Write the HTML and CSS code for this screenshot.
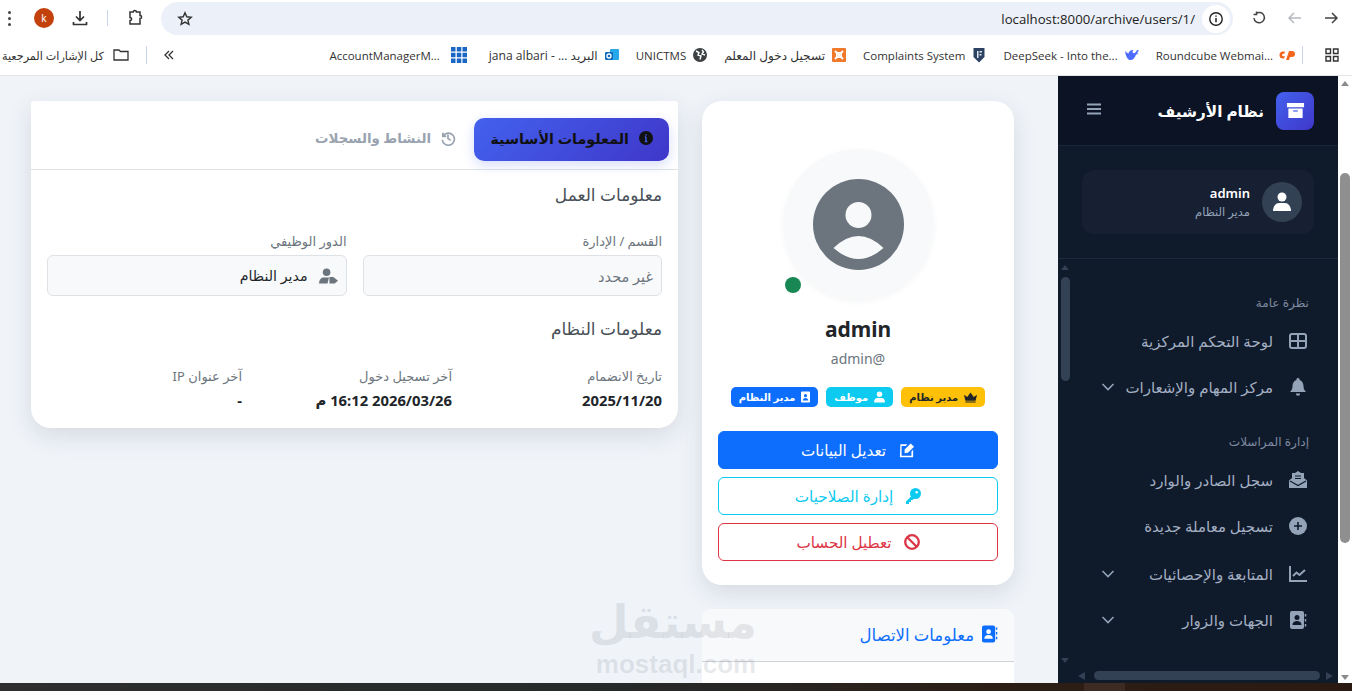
FILE: index.html
```html
<!DOCTYPE html>
<html lang="ar" dir="rtl">
<head>
  <meta charset="UTF-8" />
  <title>نظام الأرشيف</title>
  <link rel="stylesheet" href="styles.css">
</head>
<body>
  <!-- browser chrome -->
  <div class="toolbar">
    <svg class="tb-btn" viewBox="0 0 16 16"><path d="M2 8h12M9 3l5 5-5 5" fill="none" stroke="#444" stroke-width="1.5"/></svg>
    <svg class="tb-btn tb-off" viewBox="0 0 16 16"><path d="M14 8H2M7 3L2 8l5 5" fill="none" stroke="#b4b8bf" stroke-width="1.5"/></svg>
    <svg class="tb-btn" viewBox="0 0 16 16"><path d="M5 3.500A5.200 5.200 0 1 1 3 8M5.500 1.500v3h-3" fill="none" stroke="#444" stroke-width="1.5"/></svg>
    <div class="omnibox">
      <span class="site-info"><svg viewBox="0 0 16 16" width="16" height="16"><circle cx="8" cy="8" r="6.200" fill="none" stroke="#222" stroke-width="1.400"/><path d="M8 7v4.200M8 4.400v1.400" stroke="#222" stroke-width="1.500"/></svg></span>
      <span class="url" dir="ltr">localhost:8000/archive/users/1/</span>
      <svg class="star" viewBox="0 0 16 16" width="16" height="16"><path d="M8 1.800l1.800 4 4.400.4-3.300 2.900 1 4.300L8 11.100l-3.900 2.300 1-4.300-3.300-2.900 4.400-.4z" fill="none" stroke="#333" stroke-width="1.400"/></svg>
    </div>
    <svg class="tb-ext" viewBox="0 0 18 18" width="18" height="18"><path d="M4 3h3.200a1.600 1.600 0 0 1 3.200 0H14v3.400a1.600 1.600 0 0 1 0 3.200V15H4v-3.400a1.600 1.600 0 0 0 0-3.200z" fill="none" stroke="#333" stroke-width="1.500"/></svg>
    <span class="tb-sep"></span>
    <svg class="tb-dl" viewBox="0 0 18 18" width="18" height="18"><path d="M9 2v9M5 7.500L9 11.500l4-4M2.500 13v2.500h13V13" fill="none" stroke="#333" stroke-width="1.700"/></svg>
    <span class="profile">k</span>
    <span class="dots"><i></i><i></i><i></i></span>
  </div>

  <div class="bookmarks">
    <svg class="bm-apps" viewBox="0 0 14 14" width="14" height="14"><path d="M1 1h4.500v4.500H1zM8.500 1H13v4.500H8.500zM1 8.500h4.500V13H1zM8.500 8.500H13V13H8.500z" fill="none" stroke="#333" stroke-width="1.400"/></svg>
    <span class="bm-sep"></span>
    <span class="bm"><svg viewBox="0 0 16 16" width="16" height="16"><path d="M6 4.500H4a3.500 3.500 0 0 0 0 7h1l1-2.300H4.300a1.200 1.200 0 0 1 0-2.400h1zM7 13l3-9h3a2.500 2.500 0 0 1 0 6h-2l-1 3z" fill="#f4661e"/></svg><span dir="ltr">Roundcube Webmai...</span></span>
    <span class="bm"><svg viewBox="0 0 16 16" width="16" height="16"><path d="M1 4c1 1 2 2 3.500 2.500C5 4 7 2.500 9.500 3c-1 .8-1.200 2-.5 3 1.500.5 3-.5 4-3l2 .5-2 2.500 1.500 1-2.500.5C11 11 8.500 13.500 6 13 3 12.500 1.500 8 1 4z" fill="#4d6bfe"/></svg><span dir="ltr">DeepSeek - Into the...</span></span>
    <span class="bm"><svg viewBox="0 0 16 16" width="16" height="16"><path d="M2.500 1h11v9L8 15.500 2.500 10z" fill="#2d4263"/><path d="M6 4h1.500v7H6zM8.500 4H11v1.500H8.500zM8.500 7H10.500v1.500H8.500z" fill="#dfe6ef"/></svg><span dir="ltr">Complaints System</span></span>
    <span class="bm"><svg viewBox="0 0 16 16" width="16" height="16"><rect x="1" y="1" width="14" height="14" rx="1" fill="#f0792b"/><path d="M4 4l8 8M12 4l-8 8" stroke="#fff" stroke-width="2"/><rect x="5.500" y="5.500" width="5" height="5" fill="none" stroke="#fff"/></svg><span class="bm-ar">تسجيل دخول المعلم</span></span>
    <span class="bm"><svg viewBox="0 0 16 16" width="16" height="16"><circle cx="8" cy="8" r="7" fill="#3c4043"/><path d="M4 4l3 1.500-1 2.500 3 1-1 3.500M10 3l1.500 2L10 7l3 1" fill="none" stroke="#fff" stroke-width="1.400"/></svg><span dir="ltr">UNICTMS</span></span>
    <span class="bm"><svg viewBox="0 0 16 16" width="16" height="16"><rect x="6" y="2" width="9" height="11" rx="1" fill="#28a8ea"/><rect x="1" y="5" width="8" height="8" rx="1" fill="#0f6cbd"/><circle cx="5" cy="9" r="2" fill="none" stroke="#fff" stroke-width="1.300"/></svg><span class="bm-ar">البريد ... - jana albari</span></span>
    <span class="bm bm-grid"><svg viewBox="0 0 16 16" width="16" height="16"><path d="M0 0h4.500v4.500H0zM5.800 0h4.500v4.500H5.800zM11.500 0H16v4.500h-4.500zM0 5.800h4.500v4.500H0zM5.800 5.800h4.500v4.500H5.800zM11.500 5.800H16v4.500h-4.500zM0 11.500h4.500V16H0zM5.800 11.500h4.500V16H5.800zM11.500 11.500H16V16h-4.500z" fill="#1a66c4"/></svg><span dir="ltr">AccountManagerM...</span></span>
    <span class="bm-more"><svg viewBox="0 0 12 12" width="12" height="12"><path d="M6 2L2 6l4 4M10 2L6 6l4 4" fill="none" stroke="#333" stroke-width="1.300"/></svg></span>
    <span class="bm-sep bm-sep-2"></span>
    <span class="bm bm-all"><svg viewBox="0 0 16 16" width="16" height="16"><path d="M1 3h5l1.500 1.500H15V13H1z" fill="none" stroke="#333" stroke-width="1.300"/></svg><span>كل الإشارات المرجعية</span></span>
  </div>

  <div class="viewport">
    <div class="page-bar">
      <span class="pb-up"></span>
      <span class="pb-thumb"></span>
      <span class="pb-down"></span>
    </div>

    <aside class="sidebar">
      <div class="side-head">
        <div class="brand">
          <span class="brand-logo"><svg viewBox="0 0 20 20" width="19" height="19"><path d="M1 2h18v4.500H1zM2.500 8h15v10h-15z" fill="#fff"/><path d="M7.500 10.500h5" stroke="#4361ee" stroke-width="1.300"/></svg></span>
          <span class="brand-name">نظام الأرشيف</span>
        </div>
        <svg class="burger" viewBox="0 0 14 12" width="14" height="12"><path d="M0 1.500h14M0 6h14M0 10.500h14" stroke="#94a3b8" stroke-width="1.800"/></svg>
      </div>
      <div class="side-user">
        <div class="user-card">
          <span class="user-pic"><svg viewBox="0 0 18 20" width="18" height="20"><circle cx="9" cy="5" r="4.500" fill="#fff"/><path d="M0 19c0-5 3-8 6-8h6c3 0 6 3 6 8z" fill="#fff"/></svg></span>
          <div>
            <div class="user-name">admin</div>
            <div class="user-role">مدير النظام</div>
          </div>
        </div>
      </div>
      <nav class="side-nav">
        <div class="nav-title">نظرة عامة</div>
        <a class="nav-item"><svg viewBox="0 0 18 16" width="18" height="16"><rect x="1" y="1" width="16" height="14" rx="2" fill="none" stroke="#94a3b8" stroke-width="2"/><path d="M9 1v14M1 8h16" stroke="#94a3b8" stroke-width="2"/></svg><span>لوحة التحكم المركزية</span></a>
        <a class="nav-item"><svg viewBox="0 0 18 18" width="18" height="18"><path d="M9 0a1.500 1.500 0 0 1 1.500 2C13 2.700 14.500 5 14.500 8c0 3 1 4.500 2.500 6H1c1.500-1.500 2.500-3 2.500-6 0-3 1.500-5.300 4-6A1.500 1.500 0 0 1 9 0zM6.800 15.500h4.400a2.200 2.200 0 0 1-4.400 0z" fill="#94a3b8"/></svg><span>مركز المهام والإشعارات</span><svg class="chev" viewBox="0 0 14 8" width="14" height="8"><path d="M1.500 1L7 6.500 12.500 1" fill="none" stroke="#94a3b8" stroke-width="1.600"/></svg></a>
        <div class="nav-title nav-title-2">إدارة المراسلات</div>
        <a class="nav-item"><svg viewBox="0 0 18 18" width="18" height="18"><path d="M9 0l3 2h3v5l3 2.500V17H0V9.500L3 7V2h3z" fill="#94a3b8"/><path d="M6 5h6M6 7.500h6M1 10l8 4.500 8-4.500" fill="none" stroke="#0f1a2b" stroke-width="1.200"/></svg><span>سجل الصادر والوارد</span></a>
        <a class="nav-item"><svg viewBox="0 0 18 18" width="18" height="18"><circle cx="9" cy="9" r="9" fill="#94a3b8"/><path d="M9 5v8M5 9h8" stroke="#0f1a2b" stroke-width="1.600"/></svg><span>تسجيل معاملة جديدة</span></a>
        <a class="nav-item nav-item-gap"><svg viewBox="0 0 18 16" width="18" height="16"><path d="M1 0v15h17" fill="none" stroke="#94a3b8" stroke-width="2"/><path d="M4 10l3.500-3.500 3 2.500L16 4" fill="none" stroke="#94a3b8" stroke-width="2"/></svg><span>المتابعة والإحصائيات</span><svg class="chev" viewBox="0 0 14 8" width="14" height="8"><path d="M1.500 1L7 6.500 12.500 1" fill="none" stroke="#94a3b8" stroke-width="1.600"/></svg></a>
        <a class="nav-item"><svg viewBox="0 0 18 18" width="18" height="18"><rect x="1" y="0" width="14" height="18" rx="2" fill="#94a3b8"/><circle cx="8" cy="6.500" r="2.500" fill="#0f1a2b"/><path d="M3.500 14c0-3 2-4 4.500-4s4.500 1 4.500 4z" fill="#0f1a2b"/><path d="M16.500 3v2.500M16.500 8v2.500M16.500 13v2.500" stroke="#94a3b8" stroke-width="1.500"/></svg><span>الجهات والزوار</span><svg class="chev" viewBox="0 0 14 8" width="14" height="8"><path d="M1.500 1L7 6.500 12.500 1" fill="none" stroke="#94a3b8" stroke-width="1.600"/></svg></a>
        <!-- nav scrollbars sit over the list -->
        <span class="nsb-up"></span>
        <span class="nsb-thumb"></span>
        <span class="nsb-down"></span>
        <span class="hsb-left"></span>
        <span class="hsb-thumb"></span>
        <span class="hsb-right"></span>
      </nav>
    </aside>

    <main class="content">
      <div class="col-profile">
        <section class="profile-card">
          <div class="avatar-wrap">
            <div class="avatar">
              <svg viewBox="0 0 91 91" width="91" height="91"><circle cx="45.500" cy="45.500" r="45.500" fill="#6c757d"/><circle cx="45.500" cy="36" r="13" fill="#f8f9fa"/><path d="M20.500 69Q45.500 45 70.500 69Q45.500 91 20.500 69Z" fill="#f8f9fa"/></svg>
            </div>
            <span class="online"></span>
          </div>
          <h3 class="p-name">admin</h3>
          <div class="p-mail" dir="ltr">admin@</div>
          <div class="badges">
            <span class="badge b-warn"><svg viewBox="0 0 14 11" width="13" height="11"><path d="M0 2.500l3.500 2.500L7 0l3.500 5L14 2.500 12.500 9h-11zM1.500 9.800h11V11h-11z" fill="#212529"/></svg>مدير نظام</span>
            <span class="badge b-info"><svg viewBox="0 0 12 12" width="11" height="12"><circle cx="6" cy="3" r="3" fill="#fff"/><path d="M0 12c0-3.500 2-5 3.500-5h5C10 7 12 8.500 12 12z" fill="#fff"/></svg>موظف</span>
            <span class="badge b-blue"><svg viewBox="0 0 10 12" width="9" height="12"><rect width="10" height="12" rx="1" fill="#fff"/><circle cx="5" cy="4.500" r="1.700" fill="#0d6efd"/><path d="M2 10c0-2 1.300-3 3-3s3 1 3 3z" fill="#0d6efd"/></svg>مدير النظام</span>
          </div>
          <div class="actions">
            <a class="btn btn-primary"><svg viewBox="0 0 18 16" width="17" height="16"><path d="M2.500 2H10L8.200 3.800H3.800v10.400h10.400V9.500L16 7.800v8H2z" fill="#fff"/><path d="M7 7.500L13.500 1 17 4.500 10.500 11 7 11.500z" fill="#fff"/></svg>تعديل البيانات</a>
            <a class="btn btn-info"><svg viewBox="0 0 16 16" width="16" height="16"><circle cx="10.500" cy="5.500" r="5.500" fill="#0dcaf0"/><path d="M7 7.500L1 13.500V16h3v-2h2v-2h1.500L10 9.500z" fill="#0dcaf0"/><circle cx="11.700" cy="4.300" r="1.200" fill="#fff"/></svg>إدارة الصلاحيات</a>
            <a class="btn btn-danger"><svg viewBox="0 0 16 16" width="16" height="16"><circle cx="8" cy="8" r="6.800" fill="none" stroke="#dc3545" stroke-width="2.300"/><path d="M3.300 3.300l9.400 9.400" stroke="#dc3545" stroke-width="2.300"/></svg>تعطيل الحساب</a>
          </div>
        </section>
        <section class="contact-card">
          <div class="contact-head"><svg viewBox="0 0 17 18" width="16" height="18"><rect x="0" y="0" width="14" height="18" rx="2" fill="#0d6efd"/><circle cx="7" cy="6.500" r="2.500" fill="#fff"/><path d="M2.500 14c0-3 2-4 4.500-4s4.500 1 4.500 4z" fill="#fff"/><path d="M15.500 2v2.500M15.500 7v2.500M15.500 12v2.500" stroke="#0d6efd" stroke-width="1.500"/></svg>معلومات الاتصال</div>
        </section>
      </div>

      <section class="tabs-card">
        <div class="tabs-head">
          <a class="tab tab-active"><svg viewBox="0 0 14 14" width="14" height="14"><circle cx="7" cy="7" r="7" fill="#111"/><path d="M7 6v4.500M7 3.200v1.500M5.800 6H7M5.800 10.500h2.500" stroke="#4361ee" stroke-width="1.300"/></svg>المعلومات الأساسية</a>
          <a class="tab tab-off"><svg viewBox="0 0 14 14" width="16" height="16"><path d="M2.500 2.500v3h3M2.800 5.200A5.300 5.300 0 1 1 2 8.500M7 4v3.500l2.300 1.500" fill="none" stroke="#9aa3b0" stroke-width="1.500"/></svg>النشاط والسجلات</a>
        </div>
        <div class="tabs-body">
          <h6 class="sec-title">معلومات العمل</h6>
          <div class="two-col">
            <div>
              <label class="lbl">القسم / الإدارة</label>
              <div class="field muted">غير محدد</div>
            </div>
            <div>
              <label class="lbl">الدور الوظيفي</label>
              <div class="field"><svg viewBox="0 0 20 16" width="19" height="16"><circle cx="8" cy="4" r="4" fill="#6c757d"/><path d="M0 16c0-4.500 2.500-6.500 5.500-6.500h5L9 16z" fill="#6c757d"/><path d="M11 9h4l5 4-3.500 3H11z" fill="#6c757d"/></svg>مدير النظام</div>
            </div>
          </div>
          <h6 class="sec-title sec-title-2">معلومات النظام</h6>
          <div class="three-col">
            <div>
              <div class="lbl">تاريخ الانضمام</div>
              <div class="val">2025/11/20</div>
            </div>
            <div>
              <div class="lbl">آخر تسجيل دخول</div>
              <div class="val">2026/03/26 16:12 م</div>
            </div>
            <div>
              <div class="lbl">آخر عنوان IP</div>
              <div class="val">-</div>
            </div>
          </div>
        </div>
      </section>
    </main>

    <div class="watermark">
      <div class="wm-ar">مستقل</div>
      <div class="wm-en" dir="ltr">mostaql.com</div>
    </div>
  </div>

  <div class="taskbar"></div>
</body>
</html>
```
FILE: styles.css
```css
* {
  box-sizing: border-box;
}

body {
  margin: 0;
  height: 691px;
  overflow: hidden;
  display: flex;
  flex-direction: column;
  font-family: "Noto Sans", "DejaVu Sans", sans-serif;
  background: #fff;
  color: #212529;
}

a {
  text-decoration: none;
}

/* browser chrome */
.toolbar {
  height: 36px;
  display: flex;
  align-items: center;
  padding-right: 13px;
  background: #fff;
}

.tb-btn {
  width: 16px;
  height: 16px;
  margin-left: 20px;
  flex: none;
}

.omnibox {
  width: 1072px;
  height: 33px;
  margin-top: 1px;
  margin-right: -2px;
  margin-left: 17px;
  border-radius: 17px;
  background: #ecf0f8;
  display: flex;
  align-items: center;
  padding: 0 3px 0 16px;
  flex: none;
}

.site-info {
  width: 28px;
  height: 28px;
  border-radius: 50%;
  background: #fff;
  display: flex;
  align-items: center;
  justify-content: center;
}

.url {
  font-size: 13.200px;
  color: #222;
  margin-right: 7px;
  font-family: "Open Sans", sans-serif;
}

.star {
  margin-right: auto;
}

.tb-ext {
  margin-left: 18px;
  flex: none;
}

.tb-sep {
  width: 1px;
  height: 16px;
  background: #c9d5ec;
  margin-left: 18px;
  flex: none;
}

.tb-dl {
  margin-left: 17px;
  flex: none;
}

.profile {
  width: 20px;
  height: 20px;
  border-radius: 50%;
  background: #c2410c;
  color: #fff;
  font-size: 10px;
  display: flex;
  align-items: center;
  justify-content: center;
  margin-left: 23px;
  flex: none;
}

.dots {
  display: flex;
  flex-direction: column;
  gap: 3px;
}

.dots i {
  width: 3px;
  height: 3px;
  border-radius: 50%;
  background: #444;
  display: block;
}

.bookmarks {
  height: 40px;
  display: flex;
  align-items: center;
  padding: 0 13px 1px 2px;
  background: #fff;
  border-bottom: 1px solid #e3e5e8;
  font-family: "Open Sans", "DejaVu Sans", sans-serif;
  font-size: 11.500px;
  color: #333;
  white-space: nowrap;
}

.bm-apps {
  flex: none;
}

.bm-sep {
  width: 1px;
  height: 18px;
  background: #c9d5ec;
  margin: 0 22px 0 7px;
  flex: none;
}

.bm {
  display: flex;
  align-items: center;
  gap: 6px;
  margin-left: 16px;
}

.bm svg {
  flex: none;
}

.bm-ar {
  font-size: 12.100px;
}

.bm-grid {
  gap: 11px;
  margin-right: 6px;
}

.bm-more {
  margin-right: auto;
  margin-left: 16px;
  display: flex;
}

.bm-sep-2 {
  margin: 0 0 0 17px;
}

.bm-all {
  margin-left: 0;
  gap: 9px;
  font-size: 11.200px;
}

.viewport {
  position: relative;
  flex: 1;
  min-height: 0;
  display: flex;
  overflow: hidden;
  background: #f0f4f9;
}

/* page scrollbar */
.page-bar {
  width: 14px;
  flex: none;
  background: #fff;
  display: flex;
  flex-direction: column;
  align-items: center;
}

.pb-up {
  margin-top: 5px;
  border: 4.500px solid transparent;
  border-top: 0;
  border-bottom: 5px solid #8a8a8a;
}

.pb-thumb {
  width: 10px;
  height: 370px;
  margin-top: 87px;
  background: #8f8f8f;
  border-radius: 5px;
}

.pb-down {
  margin-top: auto;
  margin-bottom: 3px;
  border: 4.500px solid transparent;
  border-bottom: 0;
  border-top: 5px solid #8a8a8a;
}

/* sidebar */
.sidebar {
  width: 280px;
  flex: none;
  background: #0f1a2b;
  display: flex;
  flex-direction: column;
  color: #fff;
}

.side-head {
  height: 70px;
  flex: none;
  background: #0b1324;
  border-bottom: 1px solid #18243a;
  display: flex;
  align-items: center;
  justify-content: space-between;
  padding: 0 24px 0 29px;
}

.brand {
  display: flex;
  align-items: center;
  gap: 12px;
}

.brand-logo {
  width: 38px;
  height: 38px;
  border-radius: 8px;
  background: linear-gradient(135deg, #4361ee, #3f37c9);
  display: flex;
  align-items: center;
  justify-content: center;
}

.brand-name {
  font-size: 15.300px;
  font-weight: 700;
}

.burger {
  flex: none;
  margin-bottom: 3px;
}

.side-user {
  height: 113px;
  flex: none;
  padding: 24px;
  border-bottom: 1px solid #1c2a40;
}

.user-card {
  height: 64px;
  background: #171f33;
  border-radius: 12px;
  display: flex;
  align-items: center;
  gap: 12px;
  padding: 0 12px;
}

.user-pic {
  width: 40px;
  height: 40px;
  border-radius: 50%;
  background: #334155;
  display: flex;
  align-items: center;
  justify-content: center;
}

.user-name {
  font-size: 13px;
  font-weight: 600;
  line-height: 20px;
}

.user-role {
  font-size: 11.500px;
  color: #94a3b8;
  line-height: 18px;
}

.side-nav {
  flex: 1;
  min-height: 0;
  position: relative;
  padding: 0 31px 0 0;
}

.nav-title {
  font-size: 12.100px;
  color: #7f8ba0;
  line-height: 16px;
  margin-top: 36px;
  margin-bottom: 7px;
  margin-right: -2px;
}

.nav-title-2 {
  margin-top: 24px;
  margin-bottom: 7px;
}

.nav-item {
  height: 46px;
  display: flex;
  align-items: center;
  gap: 16px;
  color: #a3afc2;
  font-size: 15px;
  white-space: nowrap;
}

.nav-item-gap {
  margin-top: 2px;
}

.nav-item svg {
  flex: none;
}

.nav-item .chev {
  position: absolute;
  left: 43px;
}

.nsb-up, .nsb-down, .hsb-left, .hsb-right, .nsb-thumb, .hsb-thumb {
  position: absolute;
}

.nsb-up {
  left: 3px;
  top: 6px;
  border: 4.500px solid transparent;
  border-top: 0;
  border-bottom: 5px solid #334155;
}

.nsb-thumb {
  left: 3px;
  top: 18px;
  width: 9px;
  height: 104px;
  border-radius: 5px;
  background: #334155;
}

.nsb-down {
  left: 3px;
  bottom: 20px;
  border: 4.500px solid transparent;
  border-bottom: 0;
  border-top: 5px solid #334155;
}

.hsb-thumb {
  left: 36px;
  bottom: 3px;
  width: 226px;
  height: 9px;
  border-radius: 5px;
  background: #334155;
}

.hsb-left {
  left: 20px;
  bottom: 3px;
  border: 4.500px solid transparent;
  border-left: 0;
  border-right: 7px solid #334155;
}

.hsb-right {
  left: 268px;
  bottom: 3px;
  border: 4.500px solid transparent;
  border-right: 0;
  border-left: 7px solid #334155;
}

/* main content */
.content {
  flex: 1;
  min-width: 0;
  display: flex;
  align-items: flex-start;
  gap: 24px;
  padding: 25px 44px 0 31px;
}

.col-profile {
  width: 312px;
  flex: none;
  display: flex;
  flex-direction: column;
  gap: 24px;
}

.profile-card {
  height: 484px;
  background: #fff;
  border-radius: 20px;
  box-shadow: 0 8px 24px rgba(30, 41, 59, 0.12);
  padding: 48px 16px 0;
  display: flex;
  flex-direction: column;
  align-items: center;
}

.avatar-wrap {
  position: relative;
  width: 151px;
  height: 151px;
}

.avatar {
  width: 151px;
  height: 151px;
  border-radius: 50%;
  background: #f8f9fa;
  box-shadow: 0 2px 6px rgba(0, 0, 0, 0.04);
  display: flex;
  align-items: center;
  justify-content: center;
}

.online {
  position: absolute;
  left: 2px;
  bottom: 7px;
  width: 16px;
  height: 16px;
  border-radius: 50%;
  background: #198754;
}

.p-name {
  margin: 14px 0 0;
  font-size: 21px;
  line-height: 30px;
  font-weight: 700;
}

.p-mail {
  margin-top: 3px;
  font-size: 14px;
  line-height: 24px;
  color: #6c757d;
}

.badges {
  display: flex;
  gap: 8px;
  margin-top: 16px;
}

.badge {
  height: 20px;
  padding: 0 8px;
  border-radius: 5px;
  font-size: 10px;
  font-weight: 700;
  display: flex;
  align-items: center;
  gap: 6px;
  color: #fff;
}

.b-warn {
  background: #ffc107;
  color: #212529;
}

.b-info {
  background: #0dcaf0;
}

.b-blue {
  background: #0d6efd;
}

.actions {
  width: 280px;
  margin-top: 24px;
  display: flex;
  flex-direction: column;
  gap: 8px;
}

.btn {
  height: 38px;
  border-radius: 6px;
  display: flex;
  align-items: center;
  justify-content: center;
  gap: 12px;
  font-size: 15.200px;
  border: 1px solid;
}

.btn-primary {
  background: #0d6efd;
  border-color: #0d6efd;
  color: #fff;
}

.btn-info {
  border-color: #0dcaf0;
  color: #0dcaf0;
}

.btn-danger {
  border-color: #dc3545;
  color: #dc3545;
}

.contact-card {
  height: 200px;
  background: #fff;
  border-radius: 10px 10px 0 0;
  overflow: hidden;
}

.contact-head {
  height: 53px;
  background: #f8f9fa;
  border-bottom: 1px solid #ced4da;
  color: #0d6efd;
  font-size: 16.500px;
  display: flex;
  align-items: center;
  gap: 8px;
  padding: 0 16px 2px;
}

.tabs-card {
  flex: 1;
  min-width: 0;
  height: 327px;
  background: #fff;
  border-radius: 3px 3px 20px 20px;
  box-shadow: 0 8px 24px rgba(30, 41, 59, 0.12);
}

.tabs-head {
  height: 69px;
  border-bottom: 1px solid #dee2e6;
  padding: 17px 9px 0 0;
  display: flex;
  align-items: flex-start;
  gap: 2px;
}

.tab {
  height: 43px;
  padding: 0 16px 3px;
  border-radius: 10px;
  display: flex;
  align-items: center;
  gap: 9px;
  font-size: 14.300px;
  font-weight: 700;
}

.tab-off {
  font-size: 13.400px;
  color: #9aa3b0;
}

.tab-active {
  width: 195px;
  gap: 10px;
  background: linear-gradient(135deg, #4361ee, #3f37c9);
  color: #111;
  box-shadow: 0 4px 12px rgba(67, 97, 238, 0.22);
}

.tabs-body {
  padding: 13px 16px 0;
}

.sec-title {
  margin: 0;
  font-size: 17px;
  line-height: 24px;
  font-weight: 400;
  color: #495057;
}

.sec-title-2 {
  margin-top: 21px;
}

.two-col {
  display: grid;
  grid-template-columns: 1fr 1fr;
  gap: 16px;
  margin-top: 24px;
}

.lbl {
  display: block;
  font-size: 13px;
  line-height: 20px;
  color: #6c757d;
}

.field {
  height: 41px;
  margin-top: 4px;
  background: #f8f9fa;
  border: 1px solid #dee2e6;
  border-radius: 6px;
  display: flex;
  align-items: center;
  gap: 11px;
  padding: 0 8px;
  font-size: 14.200px;
}

.field.muted {
  color: #6c757d;
  font-size: 14.500px;
}

.three-col {
  display: grid;
  grid-template-columns: repeat(3, 195px);
  gap: 15px;
  margin-top: 25px;
}

.val {
  margin-top: 4px;
  font-size: 14.800px;
  line-height: 20px;
  font-weight: 700;
}

.watermark {
  position: absolute;
  left: 595px;
  top: 519px;
  width: 162px;
  text-align: center;
  color: rgba(110, 120, 135, 0.16);
  font-weight: 700;
  pointer-events: none;
  white-space: nowrap;
}

.wm-ar {
  font-family: "DejaVu Sans", sans-serif;
  font-size: 46px;
  line-height: 54px;
}

.wm-en {
  font-family: "Liberation Sans", sans-serif;
  font-size: 26px;
  line-height: 30px;
}

.taskbar {
  height: 8px;
  flex: none;
  background:
    linear-gradient(90deg, transparent 1084px, #3d2a22 1084px, #3d2a22 1125px, transparent 1125px),
    linear-gradient(90deg, #2e2e2e 0%, #262a2a 45%, #2c1d15 75%, #2a1a12 100%);
}
```
